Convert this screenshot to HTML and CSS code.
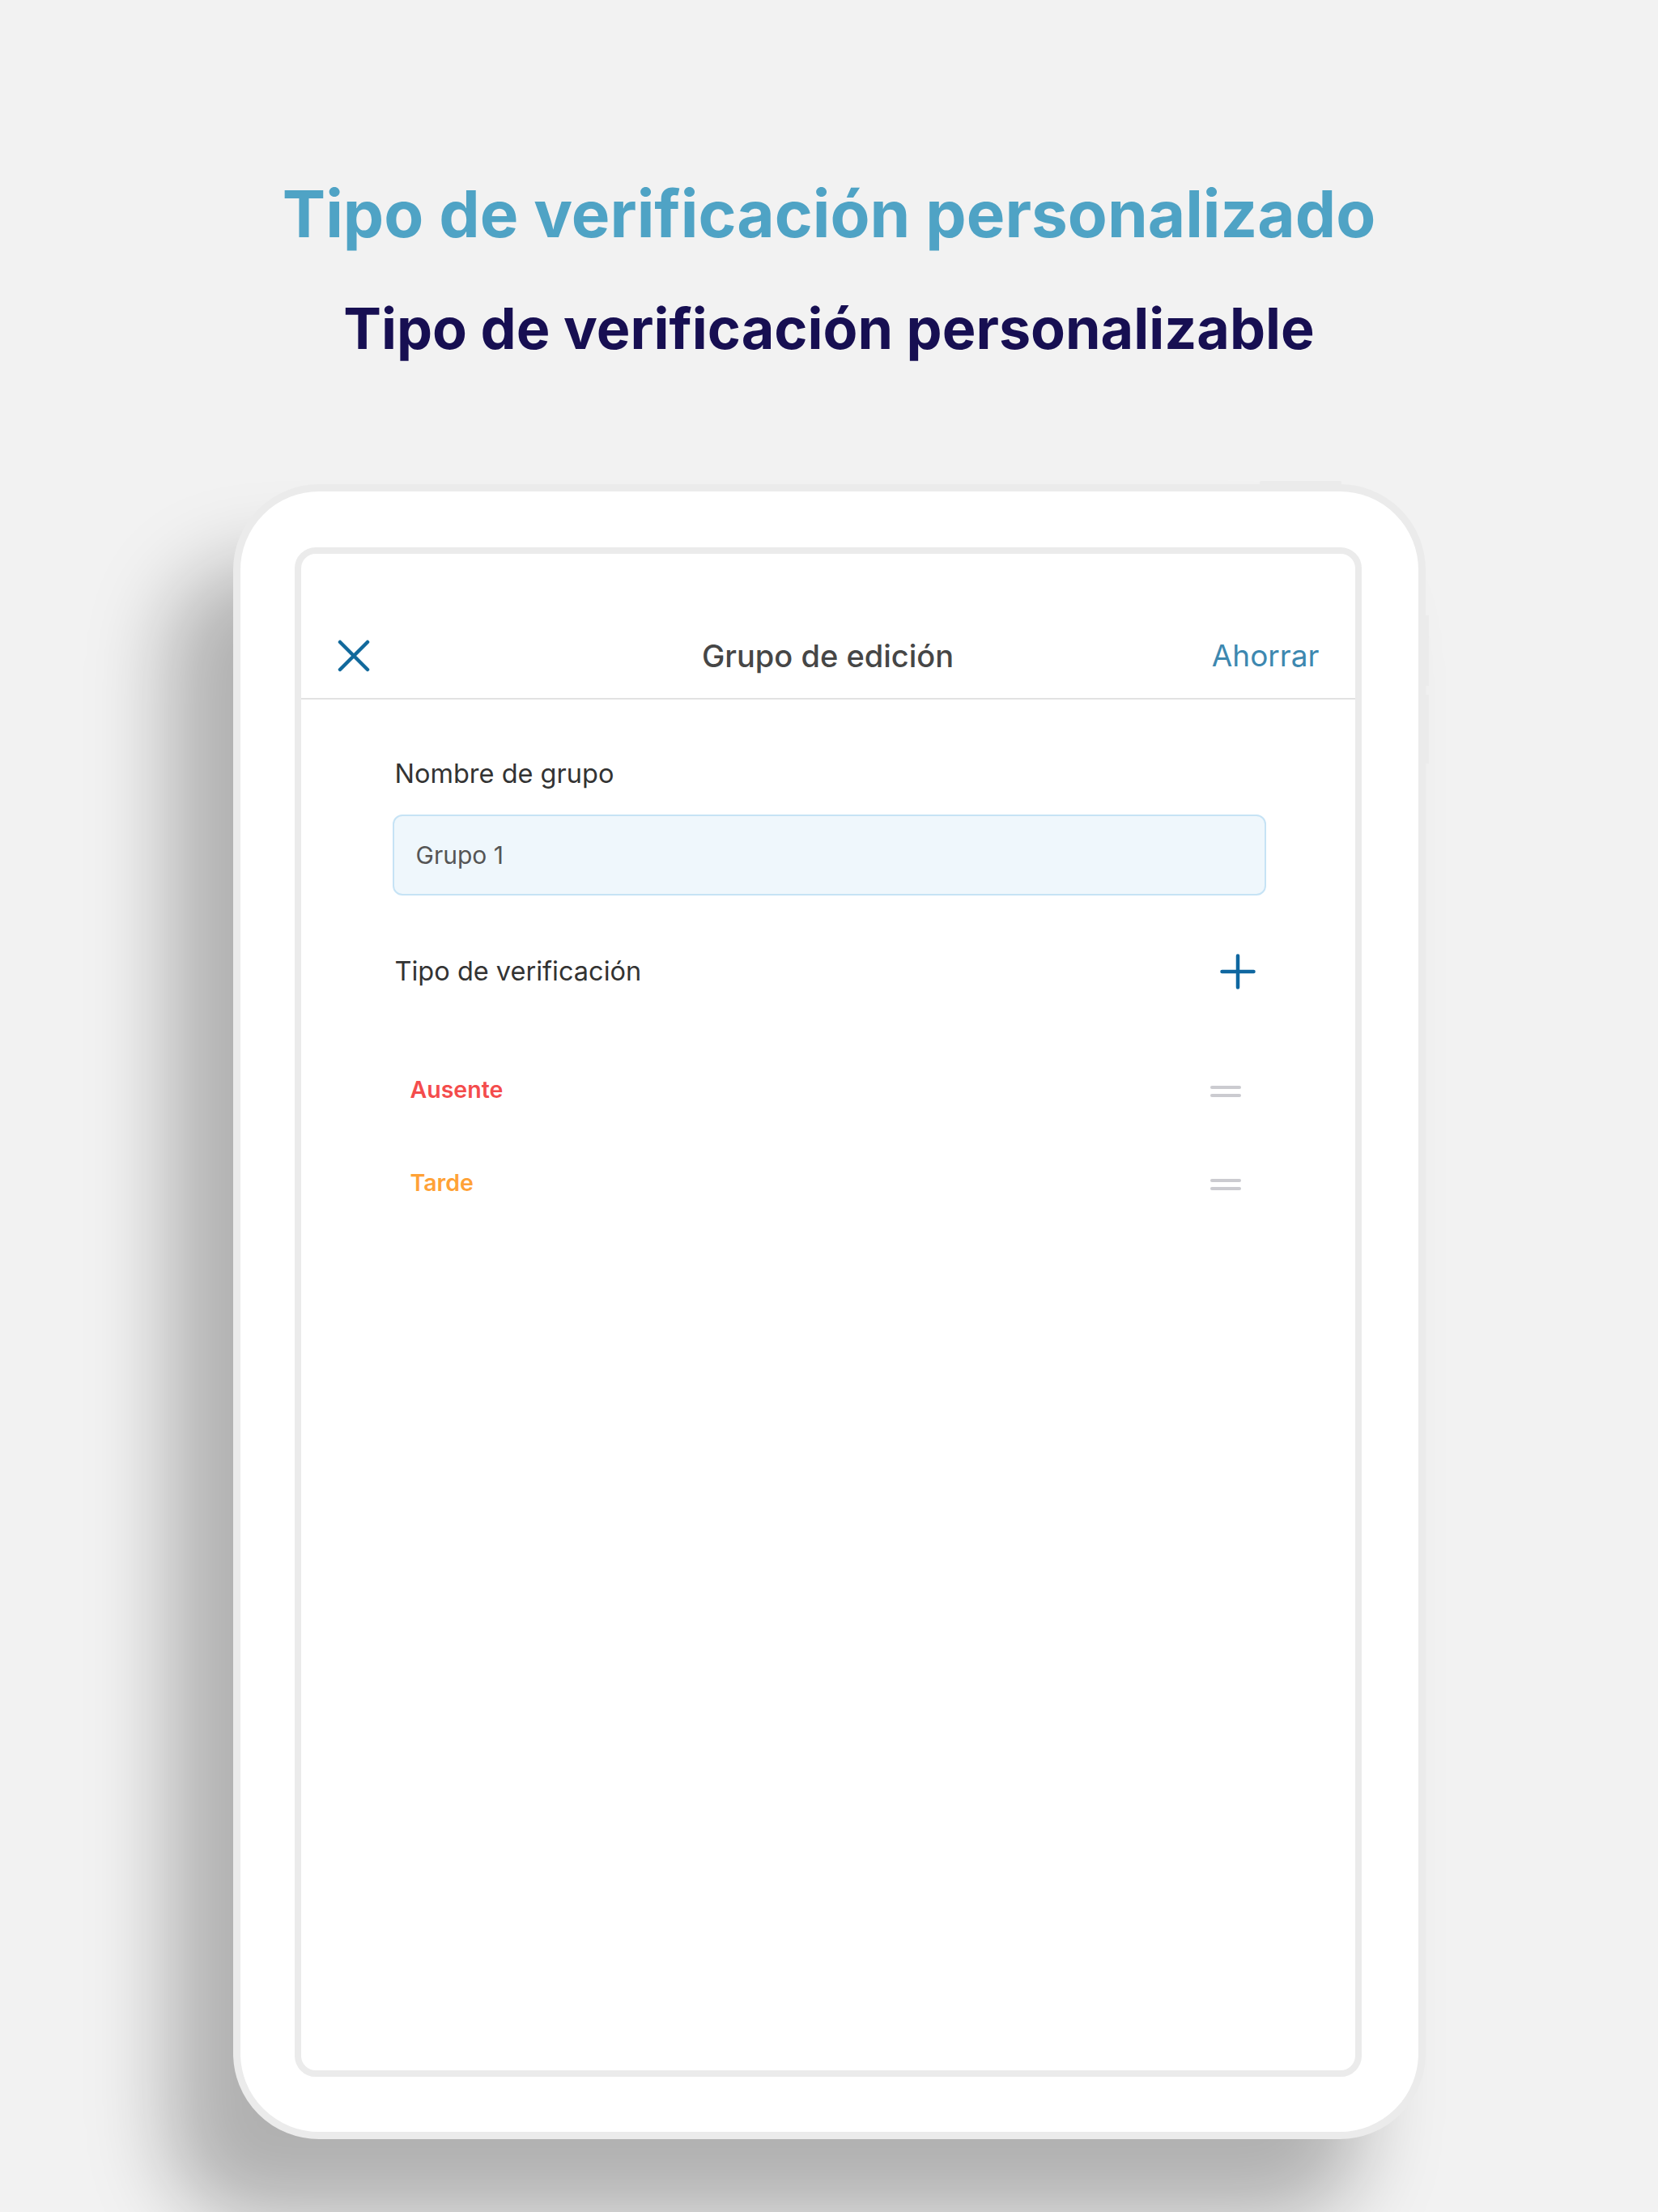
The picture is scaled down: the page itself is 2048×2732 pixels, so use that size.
FILE: index.html
```html
<!DOCTYPE html>
<html lang="es">
<head>
    <meta charset="UTF-8">
    <title>Tipo de verificación personalizado</title>
    <link rel="stylesheet" href="styles.css">
</head>
<body>

    <div class="page">
        <h1 class="title">Tipo de verificación personalizado</h1>
        <h2 class="subtitle">Tipo de verificación personalizable</h2>

        <div class="device">
            <span class="btn-top"></span>
            <span class="btn-side btn-side-1"></span>
            <span class="btn-side btn-side-2"></span>

            <div class="screen">
                <div class="header">
                    <svg class="close-icon" width="40" height="40" viewBox="0 0 40 40">
                        <path d="M3 3 L37 37 M37 3 L3 37" fill="none" stroke="#11699c" stroke-width="4.5" stroke-linecap="round"/>
                    </svg>
                    <div class="header-title">Grupo de edición</div>
                    <div class="header-action">Ahorrar</div>
                </div>

                <div class="content">
                    <div class="label">Nombre de grupo</div>
                    <div class="input">Grupo 1</div>

                    <div class="section-row">
                        <div class="label">Tipo de verificación</div>
                        <svg class="add-icon" width="44" height="44" viewBox="0 0 44 44">
                            <path d="M22 2.5 V41.5 M2.5 22 H41.5" fill="none" stroke="#0f67a0" stroke-width="4.5" stroke-linecap="round"/>
                        </svg>
                    </div>

                    <div class="list">
                        <div class="item">
                            <span class="item-name absent">Ausente</span>
                            <span class="handle"><i></i><i></i></span>
                        </div>
                        <div class="item">
                            <span class="item-name late">Tarde</span>
                            <span class="handle"><i></i><i></i></span>
                        </div>
                    </div>
                </div>
            </div>
        </div>
    </div>

</body>
</html>
```

FILE: styles.css
```css
body {
    margin: 0;
    padding: 0;
    background: #f2f2f2;
    font-family: Inter, "Noto Sans", sans-serif;
    height: 2732px;
    overflow: hidden;
}
.page {
    padding-top: 216px;
}
.title {
    margin: 0;
    text-align: center;
    font-size: 80px;
    line-height: 96px;
    font-weight: 700;
    color: #4fa3c5;
}
.subtitle {
    margin: 0;
    margin-top: 52px;
    text-align: center;
    font-size: 70px;
    line-height: 84px;
    font-weight: 700;
    color: #170f52;
}
.device {
    position: relative;
    box-sizing: border-box;
    width: 1473px;
    height: 2044px;
    margin: 150px auto 0;
    padding: 69px 70px 68px 67px;
    display: flex;
    flex-direction: column;
    background: #fff;
    border: 9px solid #ebebeb;
    border-radius: 106px;
    box-shadow: -80px 100px 100px rgba(0, 0, 0, 0.27);
}
.btn-top {
    position: absolute;
    top: -13px;
    right: 95px;
    width: 101px;
    height: 4px;
    background: #ebebeb;
    border-radius: 2px 2px 0 0;
}
.btn-side {
    position: absolute;
    right: -13px;
    width: 4px;
    background: #ebebeb;
}
.btn-side-1 {
    top: 153px;
    height: 87px;
}
.btn-side-2 {
    top: 251px;
    height: 85px;
}
.screen {
    flex: 1;
    border: 8px solid #ebebeb;
    border-radius: 26px;
    background: #fff;
}
.header {
    display: flex;
    align-items: center;
    justify-content: space-between;
    height: 60px;
    padding: 96px 44px 22px 45px;
    border-bottom: 2px solid #e2e2e2;
    position: relative;
}
.close-icon {
    display: block;
}
.header-title {
    position: absolute;
    left: 0;
    right: 0;
    bottom: 22px;
    line-height: 60px;
    text-align: center;
    font-size: 38px;
    font-weight: 500;
    color: #464646;
}
.header-action {
    font-size: 37px;
    line-height: 60px;
    color: #3d88b0;
}
.content {
    padding: 72px 110px 0 113px;
}
.label {
    padding-left: 3px;
    font-size: 32.5px;
    line-height: 40px;
    color: #333;
}
.input {
    margin-top: 30px;
    height: 96px;
    display: flex;
    align-items: center;
    padding-left: 27px;
    background: #eff7fc;
    border: 2px solid #c6e3f5;
    border-radius: 12px;
    font-size: 30px;
    color: #555;
}
.section-row {
    margin-top: 72px;
    display: flex;
    align-items: center;
    justify-content: space-between;
    padding-right: 13px;
}
.add-icon {
    display: block;
}
.list {
    margin-top: 66px;
}
.item {
    height: 115px;
    display: flex;
    align-items: center;
    justify-content: space-between;
    padding: 0 31px 0 22px;
}
.item-name {
    font-size: 28.5px;
    font-weight: 600;
}
.absent {
    color: #f44c4c;
}
.late {
    color: #ffa236;
}
.handle {
    display: flex;
    flex-direction: column;
    gap: 6px;
    margin-top: 4px;
}
.handle i {
    display: block;
    width: 38px;
    height: 4px;
    border-radius: 2px;
    background: #cbcbd0;
}
```
